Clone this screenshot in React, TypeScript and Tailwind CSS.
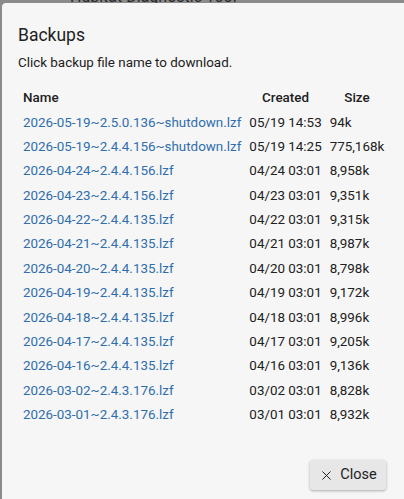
import React from 'react';
import { X } from 'lucide-react';

const backups = [
  { name: '2026-05-19~2.5.0.136~shutdown.lzf', created: '05/19 14:53', size: '94k' },
  { name: '2026-05-19~2.4.4.156~shutdown.lzf', created: '05/19 14:25', size: '775,168k' },
  { name: '2026-04-24~2.4.4.156.lzf', created: '04/24 03:01', size: '8,958k' },
  { name: '2026-04-23~2.4.4.156.lzf', created: '04/23 03:01', size: '9,351k' },
  { name: '2026-04-22~2.4.4.135.lzf', created: '04/22 03:01', size: '9,315k' },
  { name: '2026-04-21~2.4.4.135.lzf', created: '04/21 03:01', size: '8,987k' },
  { name: '2026-04-20~2.4.4.135.lzf', created: '04/20 03:01', size: '8,798k' },
  { name: '2026-04-19~2.4.4.135.lzf', created: '04/19 03:01', size: '9,172k' },
  { name: '2026-04-18~2.4.4.135.lzf', created: '04/18 03:01', size: '8,996k' },
  { name: '2026-04-17~2.4.4.135.lzf', created: '04/17 03:01', size: '9,205k' },
  { name: '2026-04-16~2.4.4.135.lzf', created: '04/16 03:01', size: '9,136k' },
  { name: '2026-03-02~2.4.3.176.lzf', created: '03/02 03:01', size: '8,828k' },
  { name: '2026-03-01~2.4.3.176.lzf', created: '03/01 03:01', size: '8,932k' },
];

const App: React.FC = () => {
  return (
    <div
      className="h-[499px] w-[404px] overflow-hidden bg-[#8b8b8b] flex flex-col"
      style={{ fontFamily: 'Roboto, "Liberation Sans", sans-serif' }}
    >
      {/* page title peeking out behind the dialog */}
      <div className="h-[3px] overflow-hidden flex items-end pl-[70px]">
        <span className="text-[16px] leading-[12px] text-[#2a2a2a] whitespace-nowrap">Hubitat Diagnostic Tool</span>
      </div>

      {/* Dialog */}
      <div className="ml-[2px] flex-1 bg-[#f6f6f6] rounded-tl-[4px] px-[16px] pt-[16px] flex flex-col text-[#212121]">
        <h2 className="text-[17.5px] leading-[32px]">Backups</h2>
        <p className="mt-[2px] text-[13.4px] leading-[20px]">Click backup file name to download.</p>

        <table className="mt-[13px] text-[13.4px] border-collapse self-start">
          <thead>
            <tr className="h-[24.4px]">
              <th className="text-left font-medium pl-[5px] pr-[4px]">Name</th>
              <th className="text-center font-medium px-[4px]">Created</th>
              <th className="text-center font-medium px-[4px]">Size</th>
            </tr>
          </thead>
          <tbody>
            {backups.map((b) => (
              <tr key={b.name} className="h-[24.4px]">
                <td className="pl-[5px] pr-[4px] whitespace-nowrap">
                  <a href="#" className="text-[#2f6ead]">{b.name}</a>
                </td>
                <td className="px-[4px] whitespace-nowrap">{b.created}</td>
                <td className="px-[4px] whitespace-nowrap">{b.size}</td>
              </tr>
            ))}
          </tbody>
        </table>

        <div className="mt-auto mb-[9px] flex justify-end pr-[2px]">
          <button className="h-[30px] w-[76px] flex items-center justify-center gap-[6px] rounded-[3px] bg-[#e7e7e7] shadow-[0_1px_3px_rgba(0,0,0,0.3)] text-[14.5px] text-[#222]">
            <X className="h-[15px] w-[15px]" strokeWidth={1.6} />
            Close
          </button>
        </div>
      </div>
    </div>
  );
};

export default App;
